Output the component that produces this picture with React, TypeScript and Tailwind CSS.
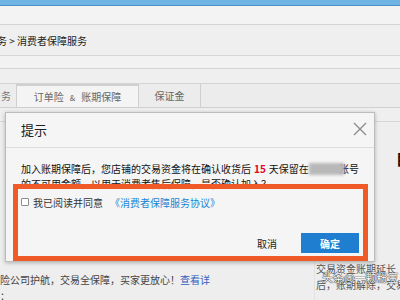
import React from 'react';

const font = "font-['Noto_Sans_CJK_SC','Liberation_Sans',sans-serif]";

const CloseIcon = () => (
  <svg width="14" height="14" viewBox="0 0 14 14" className="block">
    <path d="M1 1 L13 13 M13 1 L1 13" stroke="#8a8a8a" strokeWidth="1.3" fill="none" />
  </svg>
);

const App = () => {
  return (
    <div className={`relative w-[400px] h-[300px] overflow-hidden bg-[#eeeeee] ${font}`}>
      {/* top bar */}
      <div className="h-[5px] bg-[#6db3e3]" />
      <div className="h-[1px] bg-[#4b90c6]" />
      <div className="h-[19px] bg-[#f3f3f3] border-b border-[#d4d4d4]" />

      {/* breadcrumb */}
      <div className="h-[31px] flex items-center border-b border-[#d6d6d6] bg-[#efefef]">
        <span className="ml-[-3px] text-[10px] text-[#222] whitespace-nowrap">务 &gt; 消费者保障服务</span>
      </div>
      <div className="h-[13px] bg-[#f2f2f2] border-b border-[#d4d4d4]" />
      <div className="h-[15px] bg-[#efefef] border-b border-[#d4d4d4]" />

      {/* tabs */}
      <div className="h-[24px] flex border-b border-[#cfcfcf] bg-[#ececec]">
        <div className="w-[17px] flex items-center justify-end border-r border-[#d0d0d0] overflow-hidden">
          <span className="text-[10px] text-[#777] whitespace-nowrap mr-[5px]">务</span>
        </div>
        <div className="w-[122px] flex items-center justify-center border-t-2 border-[#3d8fd8] border-r border-[#d0d0d0] bg-[#f4f4f4]">
          <span className="text-[10px] text-[#666] whitespace-nowrap">
            订单险<span className="mx-[6px] text-[8px]">&amp;</span>账期保障
          </span>
        </div>
        <div className="w-[62px] flex items-center justify-center border-r border-[#d0d0d0]">
          <span className="text-[10px] text-[#666] whitespace-nowrap">保证金</span>
        </div>
      </div>
      <div className="h-[14px] border-b border-[#d6d6d6] bg-[#efefef]" />

      {/* page content under dialog */}
      <div className="h-[140px] flex justify-end pt-[29px] overflow-hidden">
        <span className="text-[15px] font-bold text-[#111] mr-[-11px] leading-[16px]">目</span>
      </div>

      <div className="flex items-start">
        <div className="pt-[10px] text-[10px] text-[#444] leading-[16px] whitespace-nowrap">
          <div>
            险公司护航，交易全保障，买家更放心！<span className="text-[#2f5fc0]">查看详</span>
          </div>
          <div>：</div>
        </div>
        <div className="ml-auto w-[86px] border-l border-[#e2e2e2] h-[40px] text-[10px] text-[#555] whitespace-nowrap overflow-hidden">
          <div className="leading-[13px] pl-[1px]">交易资金账期延长（</div>
          <div className="leading-[19px] pl-[1px]">后，账期解除，交易</div>
        </div>
      </div>

      {/* watermark */}
      <div className="absolute left-[322px] top-[269px] text-[11px] text-white whitespace-nowrap [text-shadow:0_0_1px_#333,0_0_1px_#333,0_0_1px_#333]">
        头条@一颗粉豆
      </div>

      {/* dialog */}
      <div className="absolute left-[5px] top-[112px] w-[370px] h-[150px] bg-[#f5f5f5] border border-[#bcbcbc] shadow-[0_1px_4px_rgba(0,0,0,0.25)]">
        <div className="h-[35px] flex items-center justify-between pl-[15px] pr-[7px] border-b border-[#dcdcdc]">
          <span className="text-[13px] text-[#222]">提示</span>
          <span className="mt-[-3px]">
            <CloseIcon />
          </span>
        </div>
        <div className="px-[15px] pt-[13px]">
          <div className="text-[10px] leading-[15px] text-[#111] whitespace-nowrap flex items-center">
            <span>加入账期保障后，您店铺的交易资金将在确认收货后</span>
            <span className="text-[#e3001b] font-bold mx-[3px]">15</span>
            <span>天保留在</span>
            <span className="relative z-10 inline-block w-[38px] h-[12px] bg-[#b8b8b8] blur-[1.5px]" />
            <span className="ml-[-5px]">账号</span>
          </div>
          <div className="text-[10px] leading-[15px] text-[#111] whitespace-nowrap">
            的不可用金额，以用于消费者售后保障，是否确认加入？
          </div>
          <div className="mt-[4px] h-[14px] flex items-center text-[10px] whitespace-nowrap">
            <span className="w-[8px] h-[8px] border border-[#8c8c8c] bg-white rounded-[1px]" />
            <span className="ml-[4px] text-[#333]">我已阅读并同意</span>
            <span className="ml-[7px] text-[#1a86d6]">《消费者保障服务协议》</span>
          </div>
          <div className="mt-[24px] flex justify-end items-center">
            <span className="text-[10px] text-[#222] mr-[24px]">取消</span>
            <span className="w-[58px] h-[20px] bg-[#1f7ed0] flex items-center justify-center text-[10px] font-bold text-white">
              确定
            </span>
          </div>
        </div>
      </div>

      {/* orange annotation box */}
      <div className="absolute left-[13px] top-[184px] w-[355px] h-[77px] border-[5px] border-[#f05a26]" />
    </div>
  );
};

export default App;
